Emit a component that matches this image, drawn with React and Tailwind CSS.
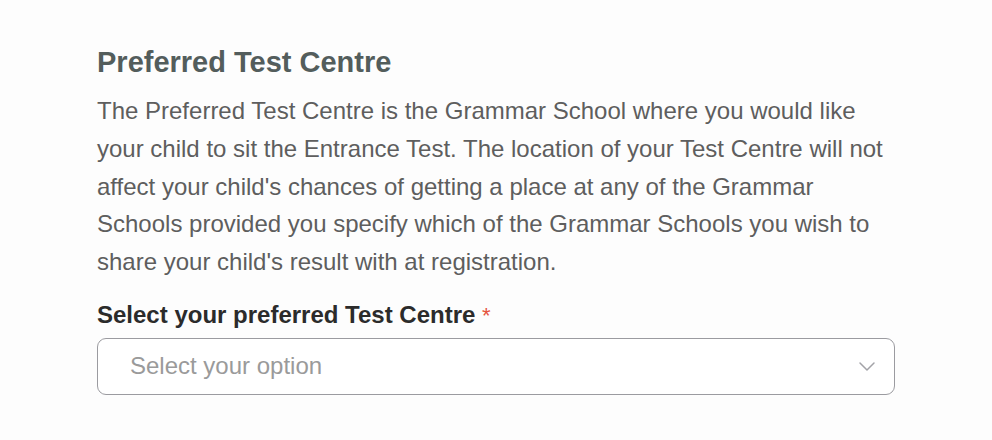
import React from 'react'

function PreferredCentre() {
  return (
    <div className="min-h-screen bg-[#fdfdfd] font-['Liberation_Sans',Arial,sans-serif]">
      <div className="w-[798px] ml-[97px] pt-[44px]">
        <h2 className="text-[29px] leading-[36px] font-bold text-[#535d5c]">Preferred Test Centre</h2>
        <p className="mt-[12px] text-[24px] leading-[37.75px] text-[#5e5e5e]">
          The Preferred Test Centre is the Grammar School where you would like your child to sit the Entrance Test. The location of your Test Centre will not affect your child's chances of getting a place at any of the Grammar Schools provided you specify which of the Grammar Schools you wish to share your child's result with at registration.
        </p>
        <label className="block mt-[19px] text-[24px] leading-[30px] font-bold text-[#2b2b2b]">
          Select your preferred Test Centre <span className="text-[22px] leading-none font-normal text-[#e5533f]">*</span>
        </label>
        <div className="mt-[8px] h-[57px] flex items-center justify-between rounded-[9px] border border-[#9b9ba0] pl-[32px] pr-[18px] bg-white">
          <span className="text-[24px] text-[#9a9a9a]">Select your option</span>
          <svg width="18" height="11" viewBox="0 0 18 11" fill="none" stroke="#a3a3a8" strokeWidth="1.5" strokeLinecap="round" strokeLinejoin="round">
            <path d="M2 2l7 7 7-7" />
          </svg>
        </div>
      </div>
    </div>
  )
}

export default function App() {
  return <PreferredCentre />
}
